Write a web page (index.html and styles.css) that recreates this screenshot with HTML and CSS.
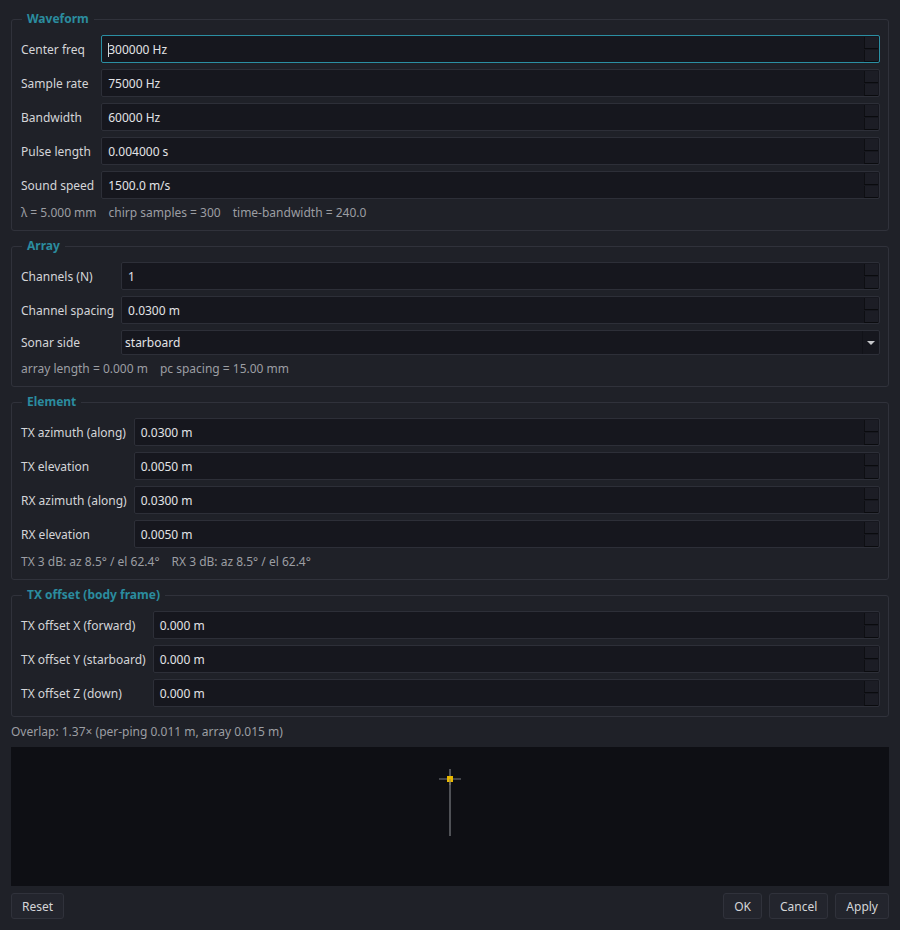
FILE: index.html
```html
<!DOCTYPE html>
<html>
<head>
    <meta charset="utf-8">
    <title>Sonar settings</title>
    <link rel="stylesheet" href="styles.css">
</head>
<body>
    <div class="dialog">
        <fieldset class="group">
            <legend>Waveform</legend>
            <div class="form">
                <label>Center freq</label>
                <div class="spin focus"><span class="val"><i class="caret"></i>300000 Hz</span><span class="arrows"><b></b><b></b></span></div>
                <label>Sample rate</label>
                <div class="spin"><span class="val">75000 Hz</span><span class="arrows"><b></b><b></b></span></div>
                <label>Bandwidth</label>
                <div class="spin"><span class="val">60000 Hz</span><span class="arrows"><b></b><b></b></span></div>
                <label>Pulse length</label>
                <div class="spin"><span class="val">0.004000 s</span><span class="arrows"><b></b><b></b></span></div>
                <label>Sound speed</label>
                <div class="spin"><span class="val">1500.0 m/s</span><span class="arrows"><b></b><b></b></span></div>
                <p class="info">λ = 5.000 mm<span>chirp samples = 300</span><span>time-bandwidth = 240.0</span></p>
            </div>
        </fieldset>

        <fieldset class="group">
            <legend>Array</legend>
            <div class="form">
                <label>Channels (N)</label>
                <div class="spin"><span class="val">1</span><span class="arrows"><b></b><b></b></span></div>
                <label>Channel spacing</label>
                <div class="spin"><span class="val">0.0300 m</span><span class="arrows"><b></b><b></b></span></div>
                <label>Sonar side</label>
                <div class="combo"><span class="val">starboard</span><span class="drop"><i></i></span></div>
                <p class="info">array length = 0.000 m<span>pc spacing = 15.00 mm</span></p>
            </div>
        </fieldset>

        <fieldset class="group">
            <legend>Element</legend>
            <div class="form">
                <label>TX azimuth (along)</label>
                <div class="spin"><span class="val">0.0300 m</span><span class="arrows"><b></b><b></b></span></div>
                <label>TX elevation</label>
                <div class="spin"><span class="val">0.0050 m</span><span class="arrows"><b></b><b></b></span></div>
                <label>RX azimuth (along)</label>
                <div class="spin"><span class="val">0.0300 m</span><span class="arrows"><b></b><b></b></span></div>
                <label>RX elevation</label>
                <div class="spin"><span class="val">0.0050 m</span><span class="arrows"><b></b><b></b></span></div>
                <p class="info">TX 3 dB: az 8.5° / el 62.4°<span>RX 3 dB: az 8.5° / el 62.4°</span></p>
            </div>
        </fieldset>

        <fieldset class="group">
            <legend>TX offset (body frame)</legend>
            <div class="form">
                <label>TX offset X (forward)</label>
                <div class="spin"><span class="val">0.000 m</span><span class="arrows"><b></b><b></b></span></div>
                <label>TX offset Y (starboard)</label>
                <div class="spin"><span class="val">0.000 m</span><span class="arrows"><b></b><b></b></span></div>
                <label>TX offset Z (down)</label>
                <div class="spin"><span class="val">0.000 m</span><span class="arrows"><b></b><b></b></span></div>
            </div>
        </fieldset>

        <p class="overlap">Overlap: 1.37× (per-ping 0.011 m, array 0.015 m)</p>

        <div class="preview">
            <svg width="877" height="139" viewBox="0 0 877 139">
                <line x1="439" y1="22" x2="439" y2="89" stroke="#4f5156" stroke-width="2"/>
                <line x1="428" y1="32" x2="450" y2="32" stroke="#55575c" stroke-width="1.5"/>
                <rect x="436" y="29" width="6" height="6" fill="#e8b800"/>
                <line x1="439" y1="32" x2="439" y2="38" stroke="#8a8060" stroke-width="1"/>
            </svg>
        </div>

        <div class="buttons">
            <button>Reset</button>
            <span class="spacer"></span>
            <button>OK</button>
            <button>Cancel</button>
            <button>Apply</button>
        </div>
    </div>
</body>
</html>
```

FILE: styles.css
```css
html, body{
    margin: 0;
    background: #1f2128;
}
body{
    font-family: "Noto Sans", "DejaVu Sans", sans-serif;
    font-size: 12px;
    color: #d4d5d8;
}
.dialog{
    display: flex;
    flex-direction: column;
    gap: 7px;
    padding: 11px 11px 0 11px;
}
.group{
    margin: 0;
    padding: 8px 8px 9px 9px;
    border: 1px solid #30323b;
    border-radius: 3px;
    min-width: 0;
}
.group legend{
    margin-left: 1px;
    padding: 0 5px;
    color: #2b8c9f;
    font-weight: bold;
    line-height: 16px;
}
.form{
    display: grid;
    grid-template-columns: max-content 1fr;
    column-gap: 6px;
    row-gap: 6px;
    align-items: center;
}
.form label{
    white-space: nowrap;
    padding-right: 1px;
}
.spin, .combo{
    display: flex;
    align-items: center;
    height: 28px;
    box-sizing: border-box;
    background: #16171e;
    border: 1px solid #2d2f38;
    border-radius: 2px;
    color: #e2e3e6;
}
.spin.focus{
    border-color: #2b8fa3;
}
.val{
    flex: 1;
    padding-left: 6px;
    white-space: nowrap;
}
.caret{
    display: inline-block;
    width: 1px;
    height: 14px;
    margin-right: -1px;
    vertical-align: -3px;
    background: #d8d8d8;
}
.arrows{
    display: flex;
    flex-direction: column;
    gap: 1px;
    margin-right: 1px;
}
.arrows b{
    display: block;
    width: 13px;
    height: 11px;
    background: #1c1d25;
    border-left: 1px solid #0e0f13;
    border-bottom: 1px solid #0a0b0e;
}
.combo{
    height: 25px;
}
.combo .val{
    padding-left: 3px;
}
.drop{
    display: flex;
    align-items: center;
    justify-content: center;
    width: 16px;
    height: 100%;
    border-left: 1px solid #111218;
}
.drop i{
    width: 0;
    height: 0;
    border-left: 4px solid transparent;
    border-right: 4px solid transparent;
    border-top: 4px solid #c6c7ca;
}
.info{
    grid-column: 1 / 3;
    margin: 0;
    line-height: 16px;
    color: #9c9ea3;
}
.info span{
    margin-left: 12px;
}
.overlap{
    margin: 0;
    line-height: 16px;
    color: #9c9ea3;
}
.preview{
    height: 139px;
    background: #0e0f14;
}
.preview svg{
    display: block;
}
.buttons{
    display: flex;
    gap: 7px;
}
.spacer{
    flex: 1;
}
button{
    height: 26px;
    padding: 0 10px;
    font-family: inherit;
    font-size: 12px;
    color: #d4d5d8;
    background: #23252d;
    border: 1px solid #30323b;
    border-radius: 3px;
}
```
